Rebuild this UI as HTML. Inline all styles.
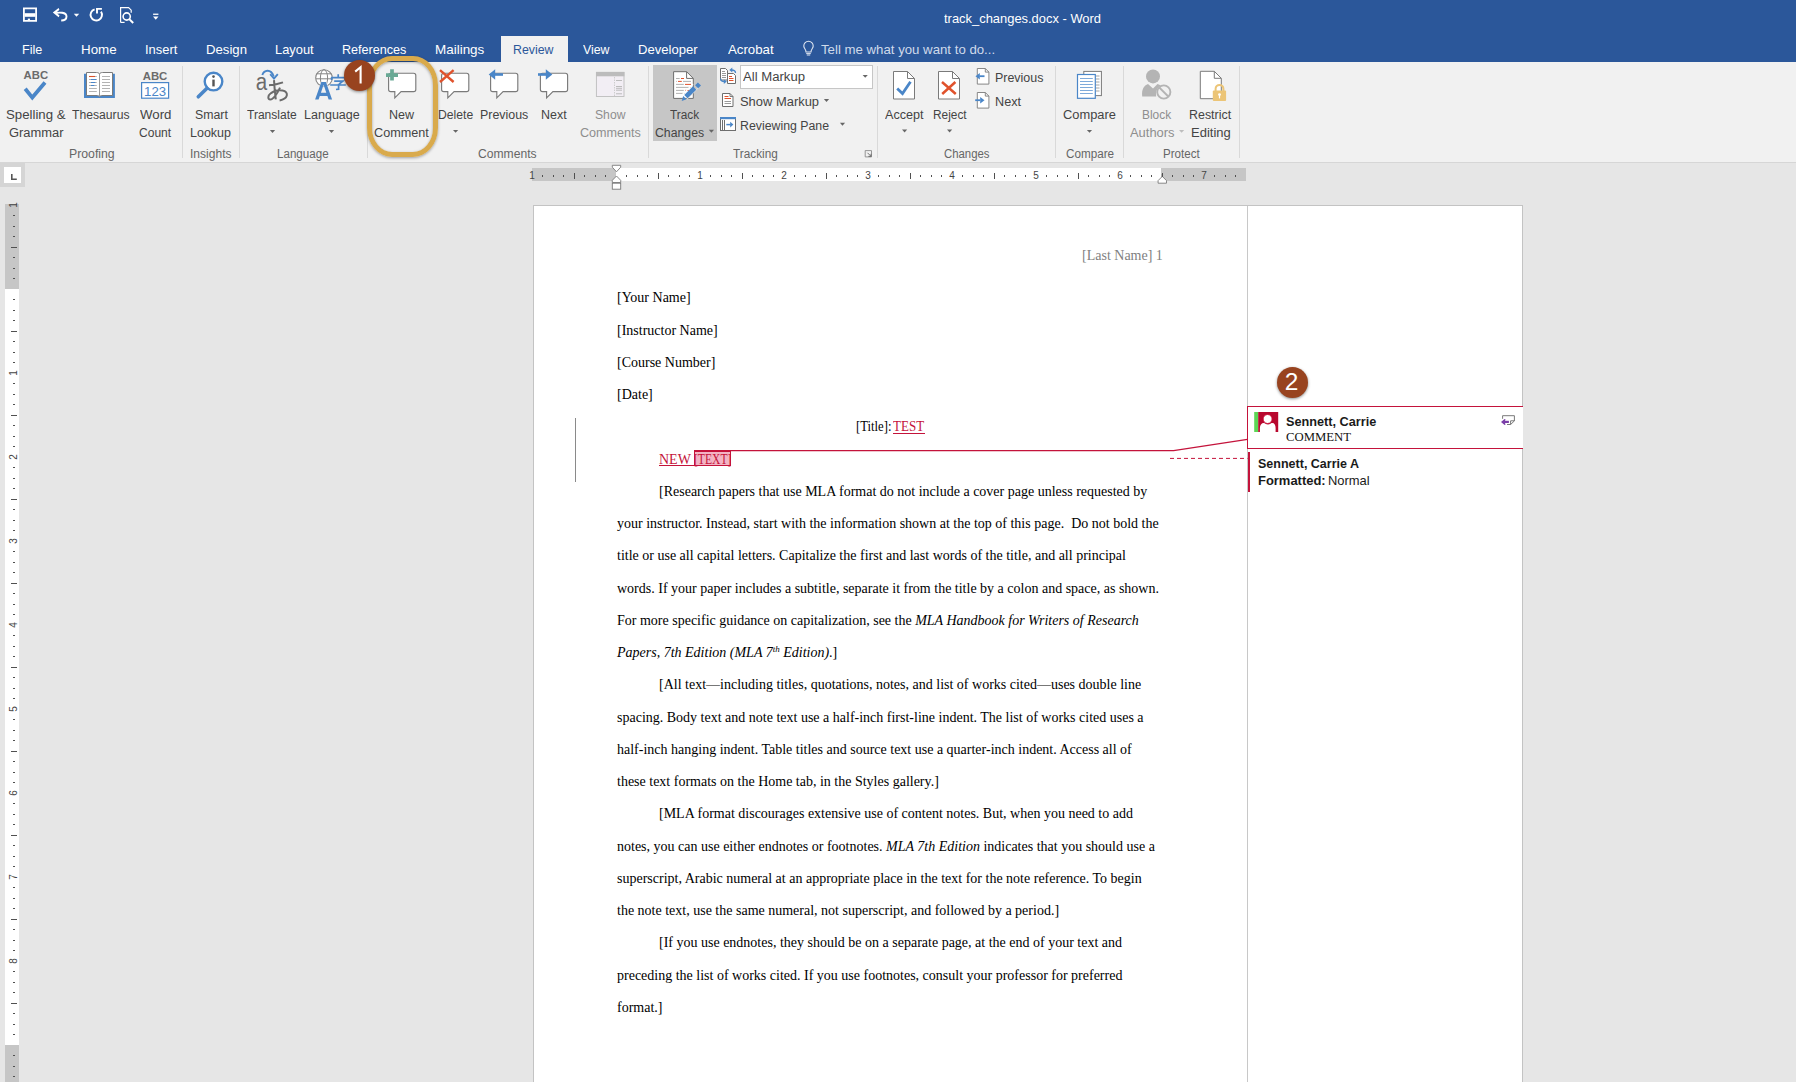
<!DOCTYPE html>
<html><head><meta charset="utf-8">
<style>
*{margin:0;padding:0;box-sizing:border-box}
html,body{width:1796px;height:1082px;overflow:hidden;background:#e6e6e6;font-family:'Liberation Sans',sans-serif;position:relative}
.a{position:absolute}
.t{position:absolute;white-space:nowrap;transform-origin:0 0}
.doc{position:absolute;font-family:'Liberation Serif',serif;font-size:14px;line-height:14px;white-space:nowrap;color:#000}
svg{position:absolute;left:0;top:0;overflow:visible}
</style></head><body>
<div class="a" style="left:0;top:0;width:1796px;height:62px;background:#2b579a"></div><div class="a" style="left:501px;top:36px;width:67px;height:27px;background:#f1f1f1"></div><div class="a" style="left:0;top:62px;width:1796px;height:100px;background:#f1f1f1"></div><div class="a" style="left:0;top:162px;width:1796px;height:1px;background:#d6d6d6"></div><div class="a" style="left:182.0px;top:66px;width:1px;height:92px;background:#d9d9d9"></div><div class="a" style="left:238.8px;top:66px;width:1px;height:92px;background:#d9d9d9"></div><div class="a" style="left:367.1px;top:66px;width:1px;height:92px;background:#d9d9d9"></div><div class="a" style="left:648.1px;top:66px;width:1px;height:92px;background:#d9d9d9"></div><div class="a" style="left:877.0px;top:66px;width:1px;height:92px;background:#d9d9d9"></div><div class="a" style="left:1055.0px;top:66px;width:1px;height:92px;background:#d9d9d9"></div><div class="a" style="left:1123.0px;top:66px;width:1px;height:92px;background:#d9d9d9"></div><div class="a" style="left:1238.8px;top:66px;width:1px;height:92px;background:#d9d9d9"></div><div class="a" style="left:653px;top:65px;width:64px;height:76px;background:#c6c6c6"></div><div class="a" style="left:740px;top:65px;width:133px;height:24px;background:#fff;border:1px solid #c6c6c6"></div><div class="a" style="left:0;top:163px;width:25px;height:24px;background:#d5d5d5"></div><div class="a" style="left:4px;top:167px;width:17px;height:16px;background:#fff"></div><div class="a" style="left:532px;top:168px;width:714px;height:13px;background:#c6c6c6"></div><div class="a" style="left:616px;top:168px;width:545px;height:13px;background:#fff"></div><div class="a" style="left:5px;top:204px;width:14px;height:878px;background:#fff"></div><div class="a" style="left:5px;top:204px;width:14px;height:85px;background:#c6c6c6"></div><div class="a" style="left:5px;top:1045px;width:14px;height:40px;background:#c6c6c6"></div><div class="a" style="left:533px;top:205px;width:990px;height:900px;background:#fff;border:1px solid #c3c3c3"></div><div class="a" style="left:1247px;top:206px;width:1px;height:880px;background:#c8c8c8"></div><div class="a" style="left:694px;top:451px;width:37px;height:15px;background:#f3b3c4;border:1px solid #c4133b"></div><div class="doc" style="left:1082px;top:248.60px;color:#7f7f7f">[Last Name] 1</div><div class="doc" style="left:617px;top:291.40px;">[Your Name]</div><div class="doc" style="left:617px;top:323.65px;">[Instructor Name]</div><div class="doc" style="left:617px;top:355.89px;">[Course Number]</div><div class="doc" style="left:617px;top:388.14px;">[Date]</div><div class="doc" style="left:856px;top:420.38px;"><span style="display:inline-block;transform:scaleX(0.905);transform-origin:0 0">[Title]:</span></div><div class="doc" style="left:893px;top:420.38px;"><span style="color:#c4133b;display:inline-block;transform:scaleX(0.93);transform-origin:0 0">TEST</span></div><div class="doc" style="left:659px;top:452.63px;"><span style="color:#c4133b">NEW</span></div><div class="doc" style="left:694.2px;top:452.63px;"><span style="color:#c4133b;display:inline-block;transform:scaleX(0.83);transform-origin:0 0">[TEXT]</span></div><div class="doc" style="left:659px;top:484.87px;">[Research papers that use MLA format do not include a cover page unless requested by</div><div class="doc" style="left:617px;top:517.12px;">your instructor. Instead, start with the information shown at the top of this page.&nbsp; Do not bold the</div><div class="doc" style="left:617px;top:549.36px;">title or use all capital letters. Capitalize the first and last words of the title, and all principal</div><div class="doc" style="left:617px;top:581.61px;">words. If your paper includes a subtitle, separate it from the title by a colon and space, as shown.</div><div class="doc" style="left:617px;top:613.85px;">For more specific guidance on capitalization, see the <i>MLA Handbook for Writers of Research</i></div><div class="doc" style="left:617px;top:646.10px;"><i>Papers, 7th Edition (MLA 7<span style="font-size:9px;position:relative;top:-5px">th</span> Edition)</i>.]</div><div class="doc" style="left:659px;top:678.34px;">[All text—including titles, quotations, notes, and list of works cited—uses double line</div><div class="doc" style="left:617px;top:710.58px;">spacing. Body text and note text use a half-inch first-line indent. The list of works cited uses a</div><div class="doc" style="left:617px;top:742.83px;">half-inch hanging indent. Table titles and source text use a quarter-inch indent. Access all of</div><div class="doc" style="left:617px;top:775.07px;">these text formats on the Home tab, in the Styles gallery.]</div><div class="doc" style="left:659px;top:807.32px;">[MLA format discourages extensive use of content notes. But, when you need to add</div><div class="doc" style="left:617px;top:839.56px;">notes, you can use either endnotes or footnotes. <i>MLA 7th Edition</i> indicates that you should use a</div><div class="doc" style="left:617px;top:871.81px;">superscript, Arabic numeral at an appropriate place in the text for the note reference. To begin</div><div class="doc" style="left:617px;top:904.05px;">the note text, use the same numeral, not superscript, and followed by a period.]</div><div class="doc" style="left:659px;top:936.30px;">[If you use endnotes, they should be on a separate page, at the end of your text and</div><div class="doc" style="left:617px;top:968.54px;">preceding the list of works cited. If you use footnotes, consult your professor for preferred</div><div class="doc" style="left:617px;top:1000.79px;">format.]</div><div class="a" style="left:893px;top:432.6px;width:32px;height:1.2px;background:#c4133b"></div><div class="a" style="left:659px;top:465px;width:36px;height:1.2px;background:#c4133b"></div><div class="a" style="left:575px;top:418px;width:1px;height:64px;background:#8a8a8a"></div><div class="a" style="left:1247px;top:406px;width:276px;height:43px;background:#fff;border:1.6px solid #c4133b;border-right:none"></div><div class="a" style="left:1247.5px;top:452px;width:2.2px;height:40px;background:#c4133b"></div>
<svg width="1796" height="1082" viewBox="0 0 1796 1082"><path d="M23.9 8.4 H36.1 V20.9 H23.9z" fill="none" stroke="#fff" stroke-width="1.8"/><rect x="24.5" y="13.2" width="11" height="3.6" fill="#fff"/><rect x="27.8" y="18.6" width="2.2" height="2" fill="#fff"/><path d="M55 13.2 C 59 12.2, 66.5 12, 66.5 16.5 C 66.5 19.5, 64 20.5, 61.2 20.5" fill="none" stroke="#fff" stroke-width="1.9"/><path d="M52.8 12.6 L58.6 8 L59.4 9.8 L56.2 12.8 L59.6 15.6 L58.6 17.2z" fill="#fff"/><path d="M73.8 13.8h5.4l-2.7 3z" fill="#fff"/><path d="M94.6 9.3 A5.7 5.7 0 1 0 101 11.6" fill="none" stroke="#fff" stroke-width="1.9"/><path d="M97 13.6 V8.9 H101.9" fill="none" stroke="#fff" stroke-width="1.9"/><path d="M120.6 22.4V7.6h8l2.6 2.6v2.6" fill="none" stroke="#fff" stroke-width="1.2"/><path d="M120.6 22.4h4" fill="none" stroke="#fff" stroke-width="1.2"/><circle cx="126.7" cy="16.5" r="3.6" fill="none" stroke="#fff" stroke-width="1.6"/><path d="M129.3 19.1 L133.2 23" stroke="#fff" stroke-width="2"/><rect x="153.1" y="13.6" width="5.3" height="1.3" fill="#fff"/><path d="M153 16.4h5.5l-2.75 3.3z" fill="#fff"/><path d="M806 52 C806 49, 803.8 48.5, 803.8 46 A4.7 4.7 0 0 1 813.2 46 C813.2 48.5, 811 49, 811 52z" fill="none" stroke="#dfe6f1" stroke-width="1.1"/><path d="M806.2 53.6h4.6M806.8 55h3.4" stroke="#dfe6f1" stroke-width="1"/><path d="M269.9 130.1h5.2l-2.6 2.9z" fill="#666"/><path d="M328.9 130.1h5.2l-2.6 2.9z" fill="#666"/><path d="M453.0 129.9h5.2l-2.6 2.9z" fill="#666"/><path d="M708.8 129.8h5.2l-2.6 2.9z" fill="#666"/><path d="M862.6 74.9h5.2l-2.6 2.9z" fill="#666"/><path d="M823.9 99.1h5.2l-2.6 2.9z" fill="#666"/><path d="M839.9 122.8h5.2l-2.6 2.9z" fill="#666"/><path d="M902.0 129.6h5.2l-2.6 2.9z" fill="#666"/><path d="M947.0 129.6h5.2l-2.6 2.9z" fill="#666"/><path d="M1086.9 129.9h5.2l-2.6 2.9z" fill="#666"/><path d="M1179.0 129.9h5.2l-2.6 2.9z" fill="#bdbdbd"/><text x="35.8" y="78.7" text-anchor="middle" font-family="Liberation Sans" font-weight="bold" font-size="11.5" fill="#6b6b6b" textLength="24.5" lengthAdjust="spacingAndGlyphs">ABC</text><path d="M25.2 88.8 L32.3 97.6 L45 82.6" fill="none" stroke="#4a86c8" stroke-width="3.8" stroke-linejoin="miter"/><path d="M84 73.8h3v21.5h24.5V73.8h3.4V98H84z" fill="#4a86c8"/><path d="M86.5 72.5h10 C98 72.5, 99 73, 99.5 74 C100 73, 101 72.5, 102.5 72.5h10v23 h-9.5 C101 95.5,100 96,99.5 96.6 C99 96,98 95.5,96 95.5h-9.5z" fill="#fff" stroke="#7b7b7b" stroke-width="1"/><path d="M99.5 74v22.5" stroke="#9a9a9a" stroke-width="1"/><path d="M89 76.5h7.8M102 76.5h8" stroke="#b3b3b3" stroke-width="1"/><path d="M89 79.5h7.8M102 79.5h8" stroke="#b3b3b3" stroke-width="1"/><path d="M89 82.5h7.8M102 82.5h8" stroke="#b3b3b3" stroke-width="1"/><path d="M89 85.5h7.8M102 85.5h8" stroke="#b3b3b3" stroke-width="1"/><path d="M89 88.5h7.8M102 88.5h8" stroke="#b3b3b3" stroke-width="1"/><path d="M89 91.5h7.8M102 91.5h8" stroke="#b3b3b3" stroke-width="1"/><path d="M89 76.5h6" stroke="#d9522b" stroke-width="1.1"/><path d="M91 79.5h5.3M91 82.5h4.3M91 85.5h3.3" stroke="#4a86c8" stroke-width="1.1"/><text x="155" y="79.6" text-anchor="middle" font-family="Liberation Sans" font-weight="bold" font-size="11.5" fill="#6b6b6b" textLength="24.6" lengthAdjust="spacingAndGlyphs">ABC</text><rect x="141.6" y="82.6" width="27" height="15.6" fill="#fff" stroke="#4a86c8" stroke-width="1.2"/><text x="155.1" y="95.8" text-anchor="middle" font-family="Liberation Sans" font-size="13" fill="#4a86c8" textLength="22" lengthAdjust="spacingAndGlyphs">123</text><circle cx="213.5" cy="81.6" r="8.8" fill="#fff" stroke="#4a86c8" stroke-width="2.4"/><path d="M207 88.2 L198.3 96.8" stroke="#4a86c8" stroke-width="3.6" stroke-linecap="round"/><rect x="212.3" y="79.6" width="2.4" height="6.8" fill="#555"/><circle cx="213.5" cy="76.6" r="1.3" fill="#555"/><path d="M262.3 75 C264 70.3, 270.5 68, 273.8 76.5" fill="none" stroke="#4a86c8" stroke-width="1.9"/><path d="M270.2 74.2 L274 78.6 L277.8 74.2" fill="none" stroke="#4a86c8" stroke-width="1.9"/><text x="0" y="0" transform="translate(255.8 89.6) scale(0.84 1)" font-family="Liberation Sans" font-size="24.5" fill="#6b6b6b">a</text><path d="M269 85.3 C273 85, 278.5 84, 283 82.4 M274 80.1 C274.3 86, 275 93, 275.8 99.3 M280 87.6 C277.5 93.5, 273 99.5, 270.3 99.5 C267.5 99.5, 267.8 95.5, 270.5 93.5 C273.5 91, 279 90, 282.5 90.5 C286 91, 287.3 93.5, 286.8 95.5 C286.2 98, 283 99.8, 279.6 100.4" fill="none" stroke="#6b6b6b" stroke-width="2"/><circle cx="324" cy="78" r="8.3" fill="#fff" stroke="#858585" stroke-width="1.1"/><ellipse cx="324" cy="78" rx="3.6" ry="8.3" fill="none" stroke="#858585" stroke-width="1"/><path d="M316.3 73.8h15.4M316 78.8h16" stroke="#858585" stroke-width="1"/><path d="M315.1 99.6 L321.3 82.1 L325.9 82.1 L332.1 99.6 L328.6 99.6 L327.4 96 L319.8 96 L318.6 99.6z M320.9 92.8 L326.3 92.8 L323.6 84.8z" fill="#4a86c8" stroke="#f1f1f1" stroke-width="0.8" paint-order="stroke"/><path d="M331.2 77.6h14.3M331.6 77.2v2.8M345 77.2v2.8M338.2 74.3v3M334.2 81.2h8.6l-3.6 2.8M330.2 85h15.6M338.6 83.8v5.4 l-2.6 0.3" fill="none" stroke="#4a86c8" stroke-width="1.7" stroke-linejoin="miter"/><path d="M390.8 73.2h22.799999999999997 a2.2 2.2 0 0 1 2.2 2.2 v13.999999999999998 a2.2 2.2 0 0 1 -2.2 2.2 H401.1 L394.8 97.8 V91.6 H390.8 a2.2 2.2 0 0 1 -2.2 -2.2 v-13.999999999999998 a2.2 2.2 0 0 1 2.2 -2.2z" fill="#fff" stroke="#7a7a7a" stroke-width="1.15"/><path d="M443.8 73.2h22.799999999999997 a2.2 2.2 0 0 1 2.2 2.2 v13.999999999999998 a2.2 2.2 0 0 1 -2.2 2.2 H454.1 L447.8 97.8 V91.6 H443.8 a2.2 2.2 0 0 1 -2.2 -2.2 v-13.999999999999998 a2.2 2.2 0 0 1 2.2 -2.2z" fill="#fff" stroke="#7a7a7a" stroke-width="1.15"/><path d="M492.8 73.2h22.799999999999997 a2.2 2.2 0 0 1 2.2 2.2 v13.999999999999998 a2.2 2.2 0 0 1 -2.2 2.2 H503.1 L496.8 97.8 V91.6 H492.8 a2.2 2.2 0 0 1 -2.2 -2.2 v-13.999999999999998 a2.2 2.2 0 0 1 2.2 -2.2z" fill="#fff" stroke="#7a7a7a" stroke-width="1.15"/><path d="M542.6 73.2h22.799999999999997 a2.2 2.2 0 0 1 2.2 2.2 v13.999999999999998 a2.2 2.2 0 0 1 -2.2 2.2 H552.9 L546.6 97.8 V91.6 H542.6 a2.2 2.2 0 0 1 -2.2 -2.2 v-13.999999999999998 a2.2 2.2 0 0 1 2.2 -2.2z" fill="#fff" stroke="#7a7a7a" stroke-width="1.15"/><path d="M392 69.2v11.4M386 75.05h12" stroke="#69a995" stroke-width="3.7"/><path d="M440 70.2 L453.6 82 M453.6 70.2 L440 82" stroke="#e0522c" stroke-width="2.4"/><path d="M503 74.5h-9" stroke="#4a86c8" stroke-width="2.6"/><path d="M488.7 74.5 L495.2 69.3 L495.2 79.8z" fill="#4a86c8"/><path d="M538 74.5h9" stroke="#4a86c8" stroke-width="2.6"/><path d="M552.3 74.5 L545.8 69.3 L545.8 79.8z" fill="#4a86c8"/><rect x="596.4" y="72.3" width="27.6" height="24.2" fill="#f2eef4" stroke="#bdbdbd" stroke-width="0.9"/><rect x="596" y="72" width="28.4" height="4.3" fill="#bcbcbc"/><path d="M614.5 77v19" stroke="#c8c8c8" stroke-width="0.9" stroke-dasharray="1.5 1"/><path d="M616 80.5h6M616 86.5h6M616 88.3h6M616 90.2h6M616 93.8h6" stroke="#b5b5b5" stroke-width="0.9"/><path d="M673.6 71.7h13l6.7 6.7v20h-19.7z" fill="#fff" stroke="#6e6e6e" stroke-width="1"/><path d="M686.6 71.7v6.7h6.7" fill="none" stroke="#6e6e6e" stroke-width="1"/><path d="M676 78.5h3.7M676 81.4h0.8M683 81.4h8M676 84.4h7.8M676 87.4h15M676 90.4h7.8M676 93.4h8.8" stroke="#a8a8a8" stroke-width="0.9"/><path d="M681 78.5h3M678 81.4h3.8M685 84.4h6M685 90.4h3.9" stroke="#e0522c" stroke-width="1"/><path d="M682.5 94.5 L693 84" stroke="#fff" stroke-width="1.4"/><path d="M686.6 99.4 L698.6 87.4" stroke="#dcdcdc" stroke-width="1.2"/><path d="M685.9 96.7 L694.6 88" stroke="#4a86c8" stroke-width="4.6"/><path d="M697.9 82.4 L701 85.5 L698.2 88.3 L695.1 85.2z" fill="#4a86c8"/><path d="M683.2 96 L686.5 99.3 L681.7 101z" fill="#4a86c8"/><path d="M720.5 68.5h5l2 2v9.5h-7z" fill="#fff" stroke="#6e6e6e" stroke-width="1"/><path d="M722 71.5h3M722 73.5h4M722 75.5h4M722 77.5h4" stroke="#9a9a9a" stroke-width="1"/><path d="M727.5 73.5h6l2 2v8h-8z" fill="#fff" stroke="#6e6e6e" stroke-width="1"/><path d="M729 76.5h3M729 78.5h4.5M729 80.5h4.5" stroke="#e0522c" stroke-width="1"/><path d="M728.5 77.5h0.01" stroke="#9a9a9a"/><path d="M735.5 73 C735.5 70.5, 734 70, 731.5 70" fill="none" stroke="#4a86c8" stroke-width="1.3"/><path d="M729.3 70 L732.3 67.6 L732.3 72.4z" fill="#4a86c8"/><path d="M720.6 78.5 C720.6 81, 722 81.6, 724.5 81.6" fill="none" stroke="#4a86c8" stroke-width="1.3"/><path d="M726.8 81.6 L723.8 79.2 L723.8 84z" fill="#4a86c8"/><path d="M722.5 93.5h7.5l3 3v10h-10.5z" fill="#fff" stroke="#6e6e6e" stroke-width="1"/><path d="M730 93.5v3h3" fill="none" stroke="#6e6e6e" stroke-width="0.9"/><path d="M724.5 96.5h4M724.5 98.5h6.5" stroke="#e0522c" stroke-width="1"/><path d="M724.5 101.5h6.5M724.5 103.5h6.5" stroke="#9a9a9a" stroke-width="1"/><rect x="720.5" y="117.5" width="15" height="13" fill="#fff" stroke="#6e6e6e" stroke-width="1"/><rect x="720" y="117" width="16" height="2.2" fill="#4a86c8"/><path d="M722.5 120v10M724.5 120v10" stroke="#6e6e6e" stroke-width="1"/><path d="M726.3 124.6h4.5" stroke="#4a86c8" stroke-width="1.5"/><path d="M733.4 124.6 L730.2 121.8 L730.2 127.4z" fill="#4a86c8"/><path d="M893.5 71.5h14 l7 7 v20.5 h-21z" fill="#fff" stroke="#7a7a7a" stroke-width="1"/><path d="M907.5 71.5v7h7" fill="none" stroke="#7a7a7a" stroke-width="1"/><path d="M938.5 71.5h14 l7 7 v20.5 h-21z" fill="#fff" stroke="#7a7a7a" stroke-width="1"/><path d="M952.5 71.5v7h7" fill="none" stroke="#7a7a7a" stroke-width="1"/><path d="M897.2 88.5 L902.5 93.5 L910.5 81.8" fill="none" stroke="#4a86c8" stroke-width="2.8"/><path d="M942 82 L955.8 94 M955.4 82 L942.2 94" stroke="#e0522c" stroke-width="2.5"/><path d="M977.3 68.5h8.0 l3.6 3.6 v12.0 h-11.6z" fill="#fff" stroke="#7a7a7a" stroke-width="0.9"/><path d="M985.3 68.5v3.6h3.6" fill="none" stroke="#7a7a7a" stroke-width="0.9"/><path d="M977.3 92.5h8.0 l3.6 3.6 v12.0 h-11.6z" fill="#fff" stroke="#7a7a7a" stroke-width="0.9"/><path d="M985.3 92.5v3.6h3.6" fill="none" stroke="#7a7a7a" stroke-width="0.9"/><path d="M984.5 76.2h-5" stroke="#4a86c8" stroke-width="1.8"/><path d="M975.5 76.2 L979.8 73 L979.8 79.4z" fill="#4a86c8"/><path d="M975.2 100.2h5" stroke="#4a86c8" stroke-width="1.8"/><path d="M984.5 100.2 L980.2 97 L980.2 103.4z" fill="#4a86c8"/><rect x="1083.8" y="71.4" width="17.6" height="24.2" fill="#fff" stroke="#7a7a7a" stroke-width="1"/><path d="M1096 76h3.5M1096 79h3.5M1096 82h3.5M1096 85h3.5M1096 88h3.5M1096 91h3.5" stroke="#999" stroke-width="0.9"/><rect x="1077.5" y="74.5" width="17.8" height="23.8" fill="#fff" stroke="#4a86c8" stroke-width="1.2"/><path d="M1080 78.5h12.8M1080 81.5h12.8M1080 84.5h12.8M1080 87.5h12.8M1080 90.5h12.8M1080 93.5h12.8" stroke="#6fa0d6" stroke-width="0.9"/><circle cx="1153" cy="76.4" r="7" fill="#b4b4b4"/><path d="M1142.2 96.5 C1141.5 89, 1144 85.5, 1148 84 L1153 88.5 L1157.5 84 C1159 84.5, 1160 85, 1160.5 85.6 C1157 88, 1155.5 92, 1156.2 96.5z" fill="#b4b4b4"/><circle cx="1163.8" cy="92" r="6.6" fill="#f1f1f1" stroke="#b4b4b4" stroke-width="1.9"/><path d="M1159.3 87.5 L1168.3 96.5" stroke="#b4b4b4" stroke-width="1.9"/><path d="M1200.3 71.3h14 l7 7 v20.4 h-21z" fill="#fff" stroke="#7a7a7a" stroke-width="1"/><path d="M1214.3 71.3v7h7" fill="none" stroke="#7a7a7a" stroke-width="1"/><path d="M1215.6 91 v-2.2 a3.9 3.9 0 0 1 7.8 0 v2.2" fill="none" stroke="#ecc577" stroke-width="2"/><rect x="1212.8" y="90.4" width="13.3" height="10.5" rx="1" fill="#ecc577"/><circle cx="1219.5" cy="94.6" r="1.4" fill="#fff"/><rect x="1218.9" y="94.6" width="1.2" height="3.8" fill="#fff"/><path d="M865.2 150.6h6.3v6.3h-6.3z" fill="none" stroke="#8a8a8a" stroke-width="0.9"/><path d="M867.5 152.8 L871 156.3 M871 153.8v2.6h-2.6" fill="none" stroke="#666" stroke-width="0.9"/><path d="M11.8 174v5.3h5" fill="none" stroke="#555" stroke-width="1.6"/><rect x="542" y="175" width="1" height="2" fill="#505050"/><rect x="553" y="175" width="1" height="2" fill="#505050"/><rect x="563" y="175" width="1" height="2" fill="#505050"/><rect x="574" y="173" width="1" height="6" fill="#505050"/><rect x="584" y="175" width="1" height="2" fill="#505050"/><rect x="595" y="175" width="1" height="2" fill="#505050"/><rect x="605" y="175" width="1" height="2" fill="#505050"/><rect x="626" y="175" width="1" height="2" fill="#505050"/><rect x="637" y="175" width="1" height="2" fill="#505050"/><rect x="647" y="175" width="1" height="2" fill="#505050"/><rect x="658" y="173" width="1" height="6" fill="#505050"/><rect x="668" y="175" width="1" height="2" fill="#505050"/><rect x="679" y="175" width="1" height="2" fill="#505050"/><rect x="689" y="175" width="1" height="2" fill="#505050"/><rect x="710" y="175" width="1" height="2" fill="#505050"/><rect x="721" y="175" width="1" height="2" fill="#505050"/><rect x="731" y="175" width="1" height="2" fill="#505050"/><rect x="742" y="173" width="1" height="6" fill="#505050"/><rect x="752" y="175" width="1" height="2" fill="#505050"/><rect x="763" y="175" width="1" height="2" fill="#505050"/><rect x="773" y="175" width="1" height="2" fill="#505050"/><rect x="794" y="175" width="1" height="2" fill="#505050"/><rect x="805" y="175" width="1" height="2" fill="#505050"/><rect x="815" y="175" width="1" height="2" fill="#505050"/><rect x="826" y="173" width="1" height="6" fill="#505050"/><rect x="836" y="175" width="1" height="2" fill="#505050"/><rect x="847" y="175" width="1" height="2" fill="#505050"/><rect x="857" y="175" width="1" height="2" fill="#505050"/><rect x="878" y="175" width="1" height="2" fill="#505050"/><rect x="889" y="175" width="1" height="2" fill="#505050"/><rect x="899" y="175" width="1" height="2" fill="#505050"/><rect x="910" y="173" width="1" height="6" fill="#505050"/><rect x="920" y="175" width="1" height="2" fill="#505050"/><rect x="931" y="175" width="1" height="2" fill="#505050"/><rect x="941" y="175" width="1" height="2" fill="#505050"/><rect x="962" y="175" width="1" height="2" fill="#505050"/><rect x="973" y="175" width="1" height="2" fill="#505050"/><rect x="983" y="175" width="1" height="2" fill="#505050"/><rect x="994" y="173" width="1" height="6" fill="#505050"/><rect x="1004" y="175" width="1" height="2" fill="#505050"/><rect x="1015" y="175" width="1" height="2" fill="#505050"/><rect x="1025" y="175" width="1" height="2" fill="#505050"/><rect x="1046" y="175" width="1" height="2" fill="#505050"/><rect x="1057" y="175" width="1" height="2" fill="#505050"/><rect x="1067" y="175" width="1" height="2" fill="#505050"/><rect x="1078" y="173" width="1" height="6" fill="#505050"/><rect x="1088" y="175" width="1" height="2" fill="#505050"/><rect x="1099" y="175" width="1" height="2" fill="#505050"/><rect x="1109" y="175" width="1" height="2" fill="#505050"/><rect x="1130" y="175" width="1" height="2" fill="#505050"/><rect x="1141" y="175" width="1" height="2" fill="#505050"/><rect x="1151" y="175" width="1" height="2" fill="#505050"/><rect x="1162" y="173" width="1" height="6" fill="#505050"/><rect x="1172" y="175" width="1" height="2" fill="#505050"/><rect x="1183" y="175" width="1" height="2" fill="#505050"/><rect x="1193" y="175" width="1" height="2" fill="#505050"/><rect x="1214" y="175" width="1" height="2" fill="#505050"/><rect x="1225" y="175" width="1" height="2" fill="#505050"/><rect x="1235" y="175" width="1" height="2" fill="#505050"/><text x="532.0" y="179" text-anchor="middle" font-family="Liberation Sans" font-size="10" fill="#444">1</text><text x="700.0" y="179" text-anchor="middle" font-family="Liberation Sans" font-size="10" fill="#444">1</text><text x="784.0" y="179" text-anchor="middle" font-family="Liberation Sans" font-size="10" fill="#444">2</text><text x="868.0" y="179" text-anchor="middle" font-family="Liberation Sans" font-size="10" fill="#444">3</text><text x="952.0" y="179" text-anchor="middle" font-family="Liberation Sans" font-size="10" fill="#444">4</text><text x="1036.0" y="179" text-anchor="middle" font-family="Liberation Sans" font-size="10" fill="#444">5</text><text x="1120.0" y="179" text-anchor="middle" font-family="Liberation Sans" font-size="10" fill="#444">6</text><text x="1204.0" y="179" text-anchor="middle" font-family="Liberation Sans" font-size="10" fill="#444">7</text><path d="M612.3 165.3h8.4v1.9l-4.2 4.6l-4.2-4.6z" fill="#fff" stroke="#7a7a7a" stroke-width="0.9"/><path d="M612.3 182.5v-2.2l4.2-4.3l4.2 4.3v2.2z" fill="#fff" stroke="#7a7a7a" stroke-width="0.9"/><rect x="612.3" y="183.2" width="8.4" height="6" fill="#fff" stroke="#7a7a7a" stroke-width="0.9"/><path d="M1158.1 183.2v-2.6l4.2-4.2l4.2 4.2v2.6z" fill="#fff" stroke="#7a7a7a" stroke-width="0.9"/><rect x="1161.8" y="174" width="1" height="3" fill="#505050"/><path d="M694 450.6H1173.6L1247.5 439.3" fill="none" stroke="#c4133b" stroke-width="1.3"/><path d="M1170 458.4H1247.5" fill="none" stroke="#c4133b" stroke-width="1" stroke-dasharray="4 3"/><rect x="1254.2" y="412" width="4" height="20" fill="#5cd655"/><rect x="1258.2" y="412" width="20" height="20" fill="#b8082e"/><path d="M1259.9 432 V428 C1259.9 425, 1261.5 423, 1263.8 423 C1265 423, 1265.8 424.6, 1268 424.6 C1270.2 424.6, 1271 423, 1272.2 423 C1274.5 423, 1275.6 425, 1275.6 428 V432z" fill="#fff"/><circle cx="1267.6" cy="419" r="4.5" fill="#fff" stroke="#c8002a" stroke-width="0.9"/><path d="M1502.6 418.8V415.7h11.8v5.2l-3.8 3.6h-3.6" fill="none" stroke="#6a6a6a" stroke-width="0.9"/><path d="M1510.6 424.4v-3.6h3.8" fill="none" stroke="#6a6a6a" stroke-width="0.9"/><path d="M1508.9 421.9h-5" stroke="#7b3fa8" stroke-width="2.2"/><path d="M1501 421.9 L1504.6 418.9 L1505.6 419.4 L1504.6 421.9 L1505.6 424.4 L1504.6 424.9z" fill="#7b3fa8"/><rect x="13" y="215" width="2" height="1" fill="#505050"/><rect x="13" y="226" width="2" height="1" fill="#505050"/><rect x="13" y="236" width="2" height="1" fill="#505050"/><rect x="11" y="247" width="6" height="1" fill="#505050"/><rect x="13" y="257" width="2" height="1" fill="#505050"/><rect x="13" y="268" width="2" height="1" fill="#505050"/><rect x="13" y="278" width="2" height="1" fill="#505050"/><rect x="13" y="299" width="2" height="1" fill="#505050"/><rect x="13" y="310" width="2" height="1" fill="#505050"/><rect x="13" y="320" width="2" height="1" fill="#505050"/><rect x="11" y="331" width="6" height="1" fill="#505050"/><rect x="13" y="341" width="2" height="1" fill="#505050"/><rect x="13" y="352" width="2" height="1" fill="#505050"/><rect x="13" y="362" width="2" height="1" fill="#505050"/><rect x="13" y="383" width="2" height="1" fill="#505050"/><rect x="13" y="394" width="2" height="1" fill="#505050"/><rect x="13" y="404" width="2" height="1" fill="#505050"/><rect x="11" y="415" width="6" height="1" fill="#505050"/><rect x="13" y="425" width="2" height="1" fill="#505050"/><rect x="13" y="436" width="2" height="1" fill="#505050"/><rect x="13" y="446" width="2" height="1" fill="#505050"/><rect x="13" y="467" width="2" height="1" fill="#505050"/><rect x="13" y="478" width="2" height="1" fill="#505050"/><rect x="13" y="488" width="2" height="1" fill="#505050"/><rect x="11" y="499" width="6" height="1" fill="#505050"/><rect x="13" y="509" width="2" height="1" fill="#505050"/><rect x="13" y="520" width="2" height="1" fill="#505050"/><rect x="13" y="530" width="2" height="1" fill="#505050"/><rect x="13" y="551" width="2" height="1" fill="#505050"/><rect x="13" y="562" width="2" height="1" fill="#505050"/><rect x="13" y="572" width="2" height="1" fill="#505050"/><rect x="11" y="583" width="6" height="1" fill="#505050"/><rect x="13" y="593" width="2" height="1" fill="#505050"/><rect x="13" y="604" width="2" height="1" fill="#505050"/><rect x="13" y="614" width="2" height="1" fill="#505050"/><rect x="13" y="635" width="2" height="1" fill="#505050"/><rect x="13" y="646" width="2" height="1" fill="#505050"/><rect x="13" y="656" width="2" height="1" fill="#505050"/><rect x="11" y="667" width="6" height="1" fill="#505050"/><rect x="13" y="677" width="2" height="1" fill="#505050"/><rect x="13" y="688" width="2" height="1" fill="#505050"/><rect x="13" y="698" width="2" height="1" fill="#505050"/><rect x="13" y="719" width="2" height="1" fill="#505050"/><rect x="13" y="730" width="2" height="1" fill="#505050"/><rect x="13" y="740" width="2" height="1" fill="#505050"/><rect x="11" y="751" width="6" height="1" fill="#505050"/><rect x="13" y="761" width="2" height="1" fill="#505050"/><rect x="13" y="772" width="2" height="1" fill="#505050"/><rect x="13" y="782" width="2" height="1" fill="#505050"/><rect x="13" y="803" width="2" height="1" fill="#505050"/><rect x="13" y="814" width="2" height="1" fill="#505050"/><rect x="13" y="824" width="2" height="1" fill="#505050"/><rect x="11" y="835" width="6" height="1" fill="#505050"/><rect x="13" y="845" width="2" height="1" fill="#505050"/><rect x="13" y="856" width="2" height="1" fill="#505050"/><rect x="13" y="866" width="2" height="1" fill="#505050"/><rect x="13" y="887" width="2" height="1" fill="#505050"/><rect x="13" y="898" width="2" height="1" fill="#505050"/><rect x="13" y="908" width="2" height="1" fill="#505050"/><rect x="11" y="919" width="6" height="1" fill="#505050"/><rect x="13" y="929" width="2" height="1" fill="#505050"/><rect x="13" y="940" width="2" height="1" fill="#505050"/><rect x="13" y="950" width="2" height="1" fill="#505050"/><rect x="13" y="971" width="2" height="1" fill="#505050"/><rect x="13" y="982" width="2" height="1" fill="#505050"/><rect x="13" y="992" width="2" height="1" fill="#505050"/><rect x="11" y="1003" width="6" height="1" fill="#505050"/><rect x="13" y="1013" width="2" height="1" fill="#505050"/><rect x="13" y="1024" width="2" height="1" fill="#505050"/><rect x="13" y="1034" width="2" height="1" fill="#505050"/><rect x="13" y="1055" width="2" height="1" fill="#505050"/><rect x="13" y="1066" width="2" height="1" fill="#505050"/><rect x="13" y="1076" width="2" height="1" fill="#505050"/><text x="0" y="0" transform="translate(17 205.0) rotate(-90)" text-anchor="middle" font-family="Liberation Sans" font-size="10" fill="#444">1</text><text x="0" y="0" transform="translate(17 373.0) rotate(-90)" text-anchor="middle" font-family="Liberation Sans" font-size="10" fill="#444">1</text><text x="0" y="0" transform="translate(17 457.0) rotate(-90)" text-anchor="middle" font-family="Liberation Sans" font-size="10" fill="#444">2</text><text x="0" y="0" transform="translate(17 541.0) rotate(-90)" text-anchor="middle" font-family="Liberation Sans" font-size="10" fill="#444">3</text><text x="0" y="0" transform="translate(17 625.0) rotate(-90)" text-anchor="middle" font-family="Liberation Sans" font-size="10" fill="#444">4</text><text x="0" y="0" transform="translate(17 709.0) rotate(-90)" text-anchor="middle" font-family="Liberation Sans" font-size="10" fill="#444">5</text><text x="0" y="0" transform="translate(17 793.0) rotate(-90)" text-anchor="middle" font-family="Liberation Sans" font-size="10" fill="#444">6</text><text x="0" y="0" transform="translate(17 877.0) rotate(-90)" text-anchor="middle" font-family="Liberation Sans" font-size="10" fill="#444">7</text><text x="0" y="0" transform="translate(17 961.0) rotate(-90)" text-anchor="middle" font-family="Liberation Sans" font-size="10" fill="#444">8</text></svg>
<div class="t" style="left:943.70px;top:12.00px;font-size:13px;line-height:13px;color:#fff;font-family:'Liberation Sans',sans-serif;transform:scaleX(0.9939);">track_changes.docx - Word</div><div class="t" style="left:21.73px;top:42.50px;font-size:13px;line-height:13px;color:#fff;font-family:'Liberation Sans',sans-serif;transform:scaleX(0.9687);">File</div><div class="t" style="left:81.17px;top:42.50px;font-size:13px;line-height:13px;color:#fff;font-family:'Liberation Sans',sans-serif;transform:scaleX(1.0285);">Home</div><div class="t" style="left:145.01px;top:42.50px;font-size:13px;line-height:13px;color:#fff;font-family:'Liberation Sans',sans-serif;transform:scaleX(0.9937);">Insert</div><div class="t" style="left:206.19px;top:42.50px;font-size:13px;line-height:13px;color:#fff;font-family:'Liberation Sans',sans-serif;transform:scaleX(1.0118);">Design</div><div class="t" style="left:275.01px;top:42.50px;font-size:13px;line-height:13px;color:#fff;font-family:'Liberation Sans',sans-serif;transform:scaleX(0.9891);">Layout</div><div class="t" style="left:342.13px;top:42.50px;font-size:13px;line-height:13px;color:#fff;font-family:'Liberation Sans',sans-serif;transform:scaleX(0.9685);">References</div><div class="t" style="left:434.97px;top:42.50px;font-size:13px;line-height:13px;color:#fff;font-family:'Liberation Sans',sans-serif;transform:scaleX(1.0343);">Mailings</div><div class="t" style="left:582.80px;top:42.50px;font-size:13px;line-height:13px;color:#fff;font-family:'Liberation Sans',sans-serif;transform:scaleX(0.9491);">View</div><div class="t" style="left:638.29px;top:42.50px;font-size:13px;line-height:13px;color:#fff;font-family:'Liberation Sans',sans-serif;transform:scaleX(1.0063);">Developer</div><div class="t" style="left:728.00px;top:42.50px;font-size:13px;line-height:13px;color:#fff;font-family:'Liberation Sans',sans-serif;transform:scaleX(1.0179);">Acrobat</div><div class="t" style="left:512.95px;top:42.50px;font-size:13px;line-height:13px;color:#2b579a;font-family:'Liberation Sans',sans-serif;transform:scaleX(0.9494);">Review</div><div class="t" style="left:821.20px;top:43.00px;font-size:13px;line-height:13px;color:#cfdaea;font-family:'Liberation Sans',sans-serif;transform:scaleX(1.0168);">Tell me what you want to do...</div><div class="t" style="left:6.30px;top:108.80px;font-size:12px;line-height:12px;color:#444;font-family:'Liberation Sans',sans-serif;transform:scaleX(1.1012);">Spelling &</div><div class="t" style="left:9.40px;top:127.00px;font-size:12px;line-height:12px;color:#444;font-family:'Liberation Sans',sans-serif;transform:scaleX(1.0756);">Grammar</div><div class="t" style="left:72.20px;top:108.80px;font-size:12px;line-height:12px;color:#444;font-family:'Liberation Sans',sans-serif;transform:scaleX(1.0142);">Thesaurus</div><div class="t" style="left:139.70px;top:108.80px;font-size:12px;line-height:12px;color:#444;font-family:'Liberation Sans',sans-serif;transform:scaleX(1.1051);">Word</div><div class="t" style="left:139.00px;top:127.00px;font-size:12px;line-height:12px;color:#444;font-family:'Liberation Sans',sans-serif;transform:scaleX(1.0034);">Count</div><div class="t" style="left:194.50px;top:108.80px;font-size:12px;line-height:12px;color:#444;font-family:'Liberation Sans',sans-serif;transform:scaleX(1.0254);">Smart</div><div class="t" style="left:190.00px;top:127.00px;font-size:12px;line-height:12px;color:#444;font-family:'Liberation Sans',sans-serif;transform:scaleX(1.0404);">Lookup</div><div class="t" style="left:247.40px;top:108.80px;font-size:12px;line-height:12px;color:#444;font-family:'Liberation Sans',sans-serif;transform:scaleX(1.0040);">Translate</div><div class="t" style="left:303.50px;top:108.80px;font-size:12px;line-height:12px;color:#444;font-family:'Liberation Sans',sans-serif;transform:scaleX(1.0444);">Language</div><div class="t" style="left:389.40px;top:108.80px;font-size:12px;line-height:12px;color:#444;font-family:'Liberation Sans',sans-serif;transform:scaleX(1.0436);">New</div><div class="t" style="left:374.30px;top:127.00px;font-size:12px;line-height:12px;color:#444;font-family:'Liberation Sans',sans-serif;transform:scaleX(1.0535);">Comment</div><div class="t" style="left:438.00px;top:108.80px;font-size:12px;line-height:12px;color:#444;font-family:'Liberation Sans',sans-serif;transform:scaleX(1.0139);">Delete</div><div class="t" style="left:480.30px;top:108.80px;font-size:12px;line-height:12px;color:#444;font-family:'Liberation Sans',sans-serif;transform:scaleX(1.0345);">Previous</div><div class="t" style="left:541.40px;top:108.80px;font-size:12px;line-height:12px;color:#444;font-family:'Liberation Sans',sans-serif;transform:scaleX(1.0379);">Next</div><div class="t" style="left:670.40px;top:108.80px;font-size:12px;line-height:12px;color:#444;font-family:'Liberation Sans',sans-serif;transform:scaleX(0.9851);">Track</div><div class="t" style="left:655.40px;top:127.00px;font-size:12px;line-height:12px;color:#444;font-family:'Liberation Sans',sans-serif;transform:scaleX(1.0222);">Changes</div><div class="t" style="left:743.00px;top:70.70px;font-size:12px;line-height:12px;color:#444;font-family:'Liberation Sans',sans-serif;transform:scaleX(1.0945);">All Markup</div><div class="t" style="left:740.00px;top:95.50px;font-size:12px;line-height:12px;color:#444;font-family:'Liberation Sans',sans-serif;transform:scaleX(1.0775);">Show Markup</div><div class="t" style="left:740.00px;top:119.50px;font-size:12px;line-height:12px;color:#444;font-family:'Liberation Sans',sans-serif;transform:scaleX(1.0271);">Reviewing Pane</div><div class="t" style="left:885.00px;top:108.80px;font-size:12px;line-height:12px;color:#444;font-family:'Liberation Sans',sans-serif;transform:scaleX(1.0495);">Accept</div><div class="t" style="left:932.70px;top:108.80px;font-size:12px;line-height:12px;color:#444;font-family:'Liberation Sans',sans-serif;transform:scaleX(0.9891);">Reject</div><div class="t" style="left:995.30px;top:71.50px;font-size:12px;line-height:12px;color:#444;font-family:'Liberation Sans',sans-serif;transform:scaleX(1.0367);">Previous</div><div class="t" style="left:995.30px;top:95.60px;font-size:12px;line-height:12px;color:#444;font-family:'Liberation Sans',sans-serif;transform:scaleX(1.0537);">Next</div><div class="t" style="left:1062.50px;top:108.80px;font-size:12px;line-height:12px;color:#444;font-family:'Liberation Sans',sans-serif;transform:scaleX(1.0709);">Compare</div><div class="t" style="left:1189.20px;top:108.80px;font-size:12px;line-height:12px;color:#444;font-family:'Liberation Sans',sans-serif;transform:scaleX(1.0354);">Restrict</div><div class="t" style="left:1191.40px;top:127.00px;font-size:12px;line-height:12px;color:#444;font-family:'Liberation Sans',sans-serif;transform:scaleX(1.0828);">Editing</div><div class="t" style="left:595.20px;top:108.80px;font-size:12px;line-height:12px;color:#8e8e8e;font-family:'Liberation Sans',sans-serif;transform:scaleX(1.0148);">Show</div><div class="t" style="left:579.80px;top:127.00px;font-size:12px;line-height:12px;color:#8e8e8e;font-family:'Liberation Sans',sans-serif;transform:scaleX(1.0498);">Comments</div><div class="t" style="left:1142.40px;top:108.80px;font-size:12px;line-height:12px;color:#8e8e8e;font-family:'Liberation Sans',sans-serif;transform:scaleX(0.9920);">Block</div><div class="t" style="left:1130.00px;top:127.00px;font-size:12px;line-height:12px;color:#8e8e8e;font-family:'Liberation Sans',sans-serif;transform:scaleX(1.0760);">Authors</div><div class="t" style="left:68.60px;top:147.50px;font-size:12px;line-height:12px;color:#666;font-family:'Liberation Sans',sans-serif;transform:scaleX(1.0222);">Proofing</div><div class="t" style="left:189.50px;top:147.50px;font-size:12px;line-height:12px;color:#666;font-family:'Liberation Sans',sans-serif;transform:scaleX(1.0036);">Insights</div><div class="t" style="left:277.40px;top:147.50px;font-size:12px;line-height:12px;color:#666;font-family:'Liberation Sans',sans-serif;transform:scaleX(0.9662);">Language</div><div class="t" style="left:478.40px;top:147.50px;font-size:12px;line-height:12px;color:#666;font-family:'Liberation Sans',sans-serif;transform:scaleX(1.0101);">Comments</div><div class="t" style="left:732.50px;top:147.50px;font-size:12px;line-height:12px;color:#666;font-family:'Liberation Sans',sans-serif;transform:scaleX(0.9823);">Tracking</div><div class="t" style="left:943.50px;top:147.50px;font-size:12px;line-height:12px;color:#666;font-family:'Liberation Sans',sans-serif;transform:scaleX(0.9472);">Changes</div><div class="t" style="left:1065.60px;top:147.50px;font-size:12px;line-height:12px;color:#666;font-family:'Liberation Sans',sans-serif;transform:scaleX(0.9742);">Compare</div><div class="t" style="left:1162.50px;top:147.50px;font-size:12px;line-height:12px;color:#666;font-family:'Liberation Sans',sans-serif;transform:scaleX(0.9643);">Protect</div><div class="t" style="left:1285.70px;top:415.00px;font-size:13px;line-height:13px;color:#1a1a1a;font-family:'Liberation Sans',sans-serif;font-weight:bold;transform:scaleX(0.9768);">Sennett, Carrie</div><div class="t" style="left:1286.00px;top:430.20px;font-size:13px;line-height:13px;color:#111;font-family:'Liberation Serif',serif;transform:scaleX(0.9774);">COMMENT</div><div class="t" style="left:1257.50px;top:457.00px;font-size:13px;line-height:13px;color:#1a1a1a;font-family:'Liberation Sans',sans-serif;font-weight:bold;transform:scaleX(0.9624);">Sennett, Carrie A</div><div class="t" style="left:1257.50px;top:473.60px;font-size:13px;line-height:13px;color:#1a1a1a;font-family:'Liberation Sans',sans-serif;font-weight:bold;transform:scaleX(0.9962);">Formatted:</div><div class="t" style="left:1327.51px;top:473.60px;font-size:13px;line-height:13px;color:#1a1a1a;font-family:'Liberation Sans',sans-serif;transform:scaleX(0.9950);">Normal</div>
<div class="a" style="left:366.5px;top:56.4px;width:71.6px;height:100.9px;border:5.2px solid #d9aa4c;border-radius:25px/29px;box-shadow:0 1px 3px rgba(0,0,0,0.35), inset 0 1px 3px rgba(0,0,0,0.35)"></div><div class="a" style="left:343.9px;top:59.7px;width:31.2px;height:31.2px;border-radius:50%;background:#98431f;box-shadow:0 1px 3px rgba(0,0,0,0.45);"></div><svg width="1796" height="200" style="position:absolute;left:0;top:0"><path d="M355.2 71.6 L360.6 67.2 V83.4" fill="none" stroke="#fff" stroke-width="2.1" stroke-linejoin="miter"/></svg><div class="a" style="left:1276.6px;top:366.5px;width:31.6px;height:31.6px;border-radius:50%;background:#98431f;box-shadow:0 1px 3px rgba(0,0,0,0.45);"></div>
<div class="t" style="left:1284.69px;top:370.15px;font-size:24.5px;line-height:24.5px;color:#fff;font-family:'Liberation Sans',sans-serif;">2</div>
</body></html>
